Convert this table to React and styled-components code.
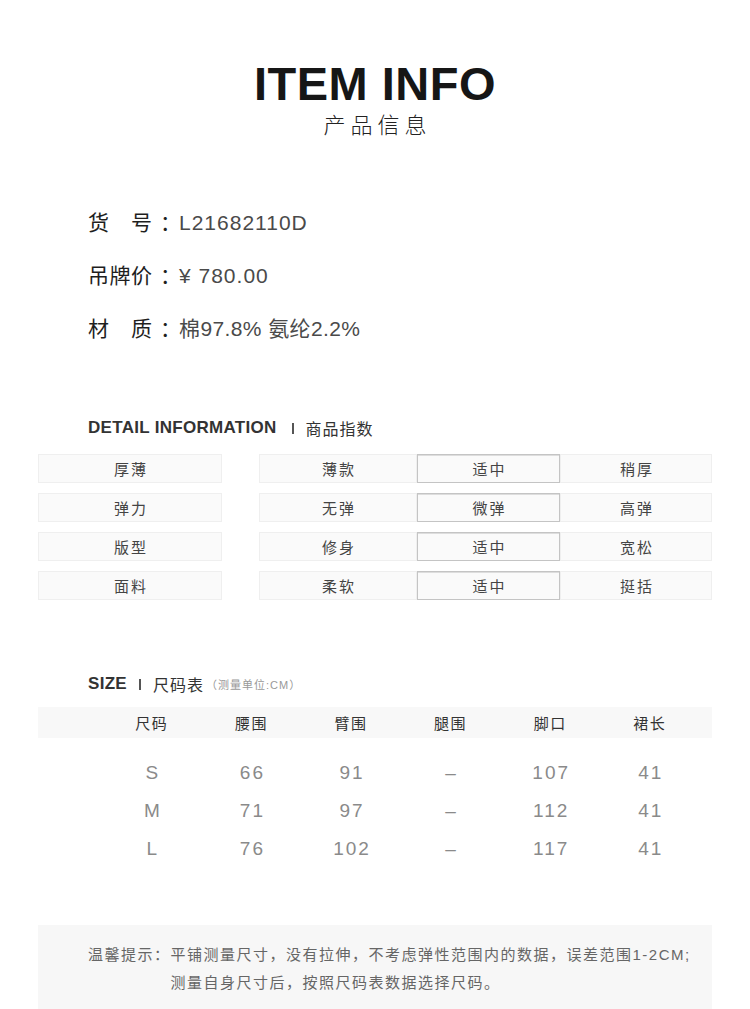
import React from "react";
import styled, { createGlobalStyle } from "styled-components";

const GlobalStyle = createGlobalStyle`
  html, body {
    margin: 0;
    padding: 0;
    background: #ffffff;
  }
  body {
    font-family: "Liberation Sans", "Noto Sans CJK SC", sans-serif;
    color: #333;
  }
`;

const Page = styled.div`
  width: 750px;
  height: 1009px;
  overflow: hidden;
  background: #fff;
`;

const Header = styled.div`
  display: flex;
  flex-direction: column;
  align-items: center;
  padding-top: 60px;
`;

const Title = styled.div`
  font-size: 47px;
  line-height: 47px;
  font-weight: 700;
  color: #161616;
  letter-spacing: 0.5px;
`;

const Subtitle = styled.div`
  margin-top: 6px;
  font-size: 22px;
  line-height: 26px;
  font-weight: 300;
  color: #222;
  letter-spacing: 5px;
  padding-left: 5px;
`;

const InfoList = styled.div`
  display: flex;
  flex-direction: column;
  gap: 32px;
  padding: 73px 0 0 88px;
`;

const InfoRow = styled.div`
  display: flex;
  align-items: center;
  height: 21px;
  font-size: 21px;
  line-height: 21px;
`;

const Label = styled.span`
  width: 64px;
  text-align: justify;
  text-align-last: justify;
  color: #1e1e1e;
`;

const Colon = styled.span`
  margin-left: 8px;
  letter-spacing: -3px;
  color: #1e1e1e;
  white-space: nowrap;
`;

const Value = styled.span`
  margin-left: 1px;
  color: #4a4a4a;
  letter-spacing: ${(p) => (p.$wide ? "1px" : "0.4px")};
`;

const SectionHead = styled.div`
  display: flex;
  align-items: center;
  padding-left: 88px;
  margin-top: ${(p) => p.$top}px;
  height: 20px;
`;

const HeadEn = styled.span`
  font-size: 17px;
  font-weight: 700;
  color: #333;
  letter-spacing: 0.3px;
`;

const HeadBar = styled.span`
  width: 2px;
  height: 11px;
  background: #555;
  margin: 0 12px 0 ${(p) => p.$left}px;
`;

const HeadCn = styled.span`
  font-size: 16px;
  color: #333;
  letter-spacing: 1px;
`;

const HeadNote = styled.span`
  font-size: 11px;
  color: #999;
  margin-left: 2px;
  letter-spacing: 1px;
`;

const DetailGrid = styled.div`
  display: flex;
  flex-direction: column;
  gap: 10px;
  margin: 16px 38px 0 38px;
`;

const DetailRow = styled.div`
  display: grid;
  grid-template-columns: 184px 37px 158px 143px 152px;
  height: 29px;
`;

const Cell = styled.div`
  display: flex;
  align-items: center;
  justify-content: center;
  background: #fafafa;
  border: 1px solid ${(p) => (p.$active ? "#c4c4c4" : "#efefef")};
  box-shadow: ${(p) => (p.$active ? "inset 0 1px 0 #ddd" : "none")};
  font-size: 15px;
  color: #444;
  letter-spacing: 2px;
  padding-left: 2px;
  box-sizing: border-box;
`;

const Spacer = styled.div``;

const SizeTable = styled.div`
  margin: 13px 38px 0 38px;
`;

const TableHead = styled.div`
  display: grid;
  grid-template-columns: repeat(6, 99.6px);
  padding-left: 64px;
  height: 31px;
  align-items: center;
  background: #f8f8f8;
`;

const HeadCell = styled.div`
  text-align: center;
  font-size: 15px;
  color: #333;
  letter-spacing: 1.5px;
`;

const TableBody = styled.div`
  display: flex;
  flex-direction: column;
  padding-top: 16px;
`;

const TableRow = styled.div`
  display: grid;
  grid-template-columns: repeat(6, 99.6px);
  padding-left: 64px;
  height: 38px;
  align-items: center;
`;

const DataCell = styled.div`
  text-align: center;
  font-size: 19px;
  color: #8a8a8a;
  letter-spacing: 2px;
  padding-left: 2px;
`;

const Note = styled.div`
  margin: 57px 38px 0 38px;
  height: 100px;
  background: #f7f7f7;
  display: flex;
  padding: 16px 0 0 50px;
  box-sizing: border-box;
  font-size: 15px;
  line-height: 28px;
  color: #666;
  letter-spacing: 1.5px;
`;

const NoteLabel = styled.span`
  flex-shrink: 0;
`;

const NoteText = styled.div`
  display: flex;
  flex-direction: column;
`;

const info = [
  { label: "货号", value: "L21682110D", wide: true },
  { label: "吊牌价", value: "¥ 780.00", wide: true },
  { label: "材质", value: "棉97.8% 氨纶2.2%" },
];

const details = [
  ["厚薄", "薄款", "适中", "稍厚"],
  ["弹力", "无弹", "微弹", "高弹"],
  ["版型", "修身", "适中", "宽松"],
  ["面料", "柔软", "适中", "挺括"],
];

const sizeHead = ["尺码", "腰围", "臂围", "腿围", "脚口", "裙长"];
const sizes = [
  ["S", "66", "91", "–", "107", "41"],
  ["M", "71", "97", "–", "112", "41"],
  ["L", "76", "102", "–", "117", "41"],
];

const App = () => {
  return (
    <Page>
      <GlobalStyle />
      <Header>
        <Title>ITEM INFO</Title>
        <Subtitle>产品信息</Subtitle>
      </Header>

      <InfoList>
        {info.map((item) => (
          <InfoRow key={item.label}>
            <Label>{item.label}</Label>
            <Colon>：</Colon>
            <Value $wide={item.wide}>{item.value}</Value>
          </InfoRow>
        ))}
      </InfoList>

      {/* detail information */}
      <SectionHead $top={79}>
        <HeadEn>DETAIL INFORMATION</HeadEn>
        <HeadBar $left={15} />
        <HeadCn>商品指数</HeadCn>
      </SectionHead>
      <DetailGrid>
        {details.map((row) => (
          <DetailRow key={row[0]}>
            <Cell>{row[0]}</Cell>
            <Spacer />
            <Cell>{row[1]}</Cell>
            <Cell $active>{row[2]}</Cell>
            <Cell>{row[3]}</Cell>
          </DetailRow>
        ))}
      </DetailGrid>

      {/* size table */}
      <SectionHead $top={74}>
        <HeadEn>SIZE</HeadEn>
        <HeadBar $left={12} />
        <HeadCn>尺码表</HeadCn>
        <HeadNote>（测量单位:CM）</HeadNote>
      </SectionHead>
      <SizeTable>
        <TableHead>
          {sizeHead.map((h) => (
            <HeadCell key={h}>{h}</HeadCell>
          ))}
        </TableHead>
        <TableBody>
          {sizes.map((row) => (
            <TableRow key={row[0]}>
              {row.map((v, i) => (
                <DataCell key={i}>{v}</DataCell>
              ))}
            </TableRow>
          ))}
        </TableBody>
      </SizeTable>

      <Note>
        <NoteLabel>温馨提示：</NoteLabel>
        <NoteText>
          <span>平铺测量尺寸，没有拉伸，不考虑弹性范围内的数据，误差范围1-2CM;</span>
          <span>测量自身尺寸后，按照尺码表数据选择尺码。</span>
        </NoteText>
      </Note>
    </Page>
  );
};

export default App;
